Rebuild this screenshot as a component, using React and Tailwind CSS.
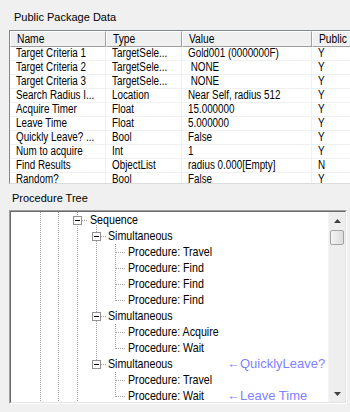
import React from "react";

const sans = { fontFamily: '"Liberation Sans", Arial, sans-serif' };

const tableRows = [
  ["Target Criteria 1", "TargetSele...", "Gold001 (0000000F)", "Y"],
  ["Target Criteria 2", "TargetSele...", "\u00a0NONE", "Y"],
  ["Target Criteria 3", "TargetSele...", "\u00a0NONE", "Y"],
  ["Search Radius I...", "Location", "Near Self, radius 512", "Y"],
  ["Acquire Timer", "Float", "15.000000", "Y"],
  ["Leave Time", "Float", "5.000000", "Y"],
  ["Quickly Leave? ...", "Bool", "False", "Y"],
  ["Num to acquire", "Int", "1", "Y"],
  ["Find Results", "ObjectList", "radius 0.000[Empty]", "N"],
  ["Random?", "Bool", "False", "Y"],
];

const treeRows = [
  { t: "Sequence", lvl: 0 },
  { t: "Simultaneous", lvl: 1 },
  { t: "Procedure: Travel", lvl: 2 },
  { t: "Procedure: Find", lvl: 2 },
  { t: "Procedure: Find", lvl: 2 },
  { t: "Procedure: Find", lvl: 2 },
  { t: "Simultaneous", lvl: 1 },
  { t: "Procedure: Acquire", lvl: 2 },
  { t: "Procedure: Wait", lvl: 2 },
  { t: "Simultaneous", lvl: 1, note: "\u2190QuicklyLeave?" },
  { t: "Procedure: Travel", lvl: 2 },
  { t: "Procedure: Wait", lvl: 2, note: "\u2190Leave Time" },
];

const ROW = 16;
const yc = (i) => 8 + ROW * i;

function VLine({ x, y1, y2 }) {
  return (
    <line x1={x + 0.5} x2={x + 0.5} y1={y1} y2={y2} stroke="#a0a0a0" strokeDasharray="1 1" shapeRendering="crispEdges" />
  );
}
function HLine({ y, x1, x2 }) {
  return (
    <line y1={y + 0.5} y2={y + 0.5} x1={x1} x2={x2} stroke="#a0a0a0" strokeDasharray="1 1" shapeRendering="crispEdges" />
  );
}
function Box({ cx, cy }) {
  return (
    <g shapeRendering="crispEdges">
      <rect x={cx - 4 + 0.5} y={cy - 4 + 0.5} width={8} height={8} fill="#fff" stroke="#919191" />
      <line x1={cx - 2} x2={cx + 3} y1={cy + 0.5} y2={cy + 0.5} stroke="#000" />
    </g>
  );
}

function TreeLines() {
  const H = 190;
  const simRows = [1, 6, 9];
  const children = { 1: [2, 5], 6: [7, 8], 9: [10, 11] };
  return (
    <svg className="absolute left-0 top-0" width="317" height={H}>
      <VLine x={29} y1={0} y2={H} />
      <VLine x={47} y1={0} y2={H} />
      <VLine x={66} y1={0} y2={H} />
      <VLine x={85} y1={yc(0) + 5} y2={yc(9)} />
      <HLine y={yc(0)} x1={71} x2={77} />
      {simRows.map((r) => (
        <g key={r}>
          <HLine y={yc(r)} x1={90} x2={96} />
          <VLine x={104} y1={yc(r) + 8} y2={yc(children[r][1]) + 1} />
        </g>
      ))}
      {treeRows.map((row, i) =>
        row.lvl === 2 ? <HLine key={i} y={yc(i)} x1={105} x2={115} /> : null
      )}
      <Box cx={66} cy={yc(0)} />
      {simRows.map((r) => (
        <Box key={"b" + r} cx={85} cy={yc(r)} />
      ))}
    </svg>
  );
}

function T({ children }) {
  return <span className="inline-block origin-left scale-x-[0.82] whitespace-nowrap">{children}</span>;
}

export default function App() {
  const colW = ["w-[96px]", "w-[76px]", "w-[130px]", "w-[60px]"];
  return (
    <div className="w-[350px] h-[412px] bg-[#f0f0f0] overflow-hidden flex flex-col text-black" style={sans}>
      <div className="h-[30px] pl-[14px] pt-[10px] text-[11px] leading-[14px]">
        Public Package Data
      </div>
      <div className="ml-[9px] w-[360px] h-[154px] shrink-0 border-l border-t border-b border-l-[#828790] border-t-[#828790] border-b-[#dcdcdc] bg-white overflow-hidden flex flex-col">
        <div className="flex h-[16px] shrink-0 text-[12.5px] leading-[14px]">
          {["Name", "Type", "Value", "Public"].map((h, i) => (
            <div
              key={h}
              className={`${colW[i]} shrink-0 bg-[#f0f0f0] border-t border-l border-b border-r border-t-white border-l-white border-b-[#a0a0a0] border-r-[#a0a0a0] pl-[6px] flex items-center overflow-hidden`}
            >
              <T>{h}</T>
            </div>
          ))}
        </div>
        {tableRows.map((r, ri) => (
          <div key={ri} className="flex h-[14px] shrink-0 text-[12px] leading-[13px] border-b border-[#f0f0f0]">
            {r.map((c, ci) => (
              <div key={ci} className={`${colW[ci]} shrink-0 pl-[6px] border-r border-[#f0f0f0] flex items-center overflow-hidden`}>
                <T>{c}</T>
              </div>
            ))}
          </div>
        ))}
      </div>
      <div className="h-[26px] shrink-0 pl-[12px] pt-[7px] text-[11px] leading-[14px]">
        Procedure Tree
      </div>
      <div className="ml-[9px] w-[338px] h-[194px] shrink-0 border border-t-[#a0a0a0] border-l-[#a0a0a0] border-r-white border-b-white">
        <div className="w-full h-full border border-t-[#696969] border-l-[#696969] border-r-[#e3e3e3] border-b-[#e3e3e3] bg-white flex">
          <div className="relative flex-1 overflow-hidden">
            <TreeLines />
            <div className="relative flex flex-col text-[13px] leading-[16px]">
              {treeRows.map((row, i) => (
                <div
                  key={i}
                  className={`h-[16px] flex items-center whitespace-nowrap ${
                    row.lvl === 0 ? "pl-[79px]" : row.lvl === 1 ? "pl-[97px]" : "pl-[117px]"
                  }`}
                >
                  <span className={row.lvl === 1 ? "w-[119px] shrink-0" : row.lvl === 2 ? "w-[99px] shrink-0" : ""}>
                    <T>{row.t}</T>
                  </span>
                  {row.note && <span className="text-[#7f7fff]">{row.note}</span>}
                </div>
              ))}
            </div>
          </div>
          <div className="w-[17px] shrink-0 bg-[#eeeeee] border-l border-[#f5f5f5] flex flex-col">
            <div className="h-[17px] flex items-center justify-center">
              <svg width="7" height="4" viewBox="0 0 7 4"><path d="M3.5 0 L7 4 L0 4 Z" fill="#404040" /></svg>
            </div>
            <div className="mx-[1px] mt-[1px] h-[15px] rounded-[2px] border border-[#a3a3a3] bg-gradient-to-r from-[#f4f4f4] to-[#dcdcdc]" />
            <div className="flex-1" />
            <div className="h-[17px] flex items-center justify-center">
              <svg width="7" height="4" viewBox="0 0 7 4"><path d="M0 0 L7 0 L3.5 4 Z" fill="#404040" /></svg>
            </div>
          </div>
        </div>
      </div>
    </div>
  );
}
